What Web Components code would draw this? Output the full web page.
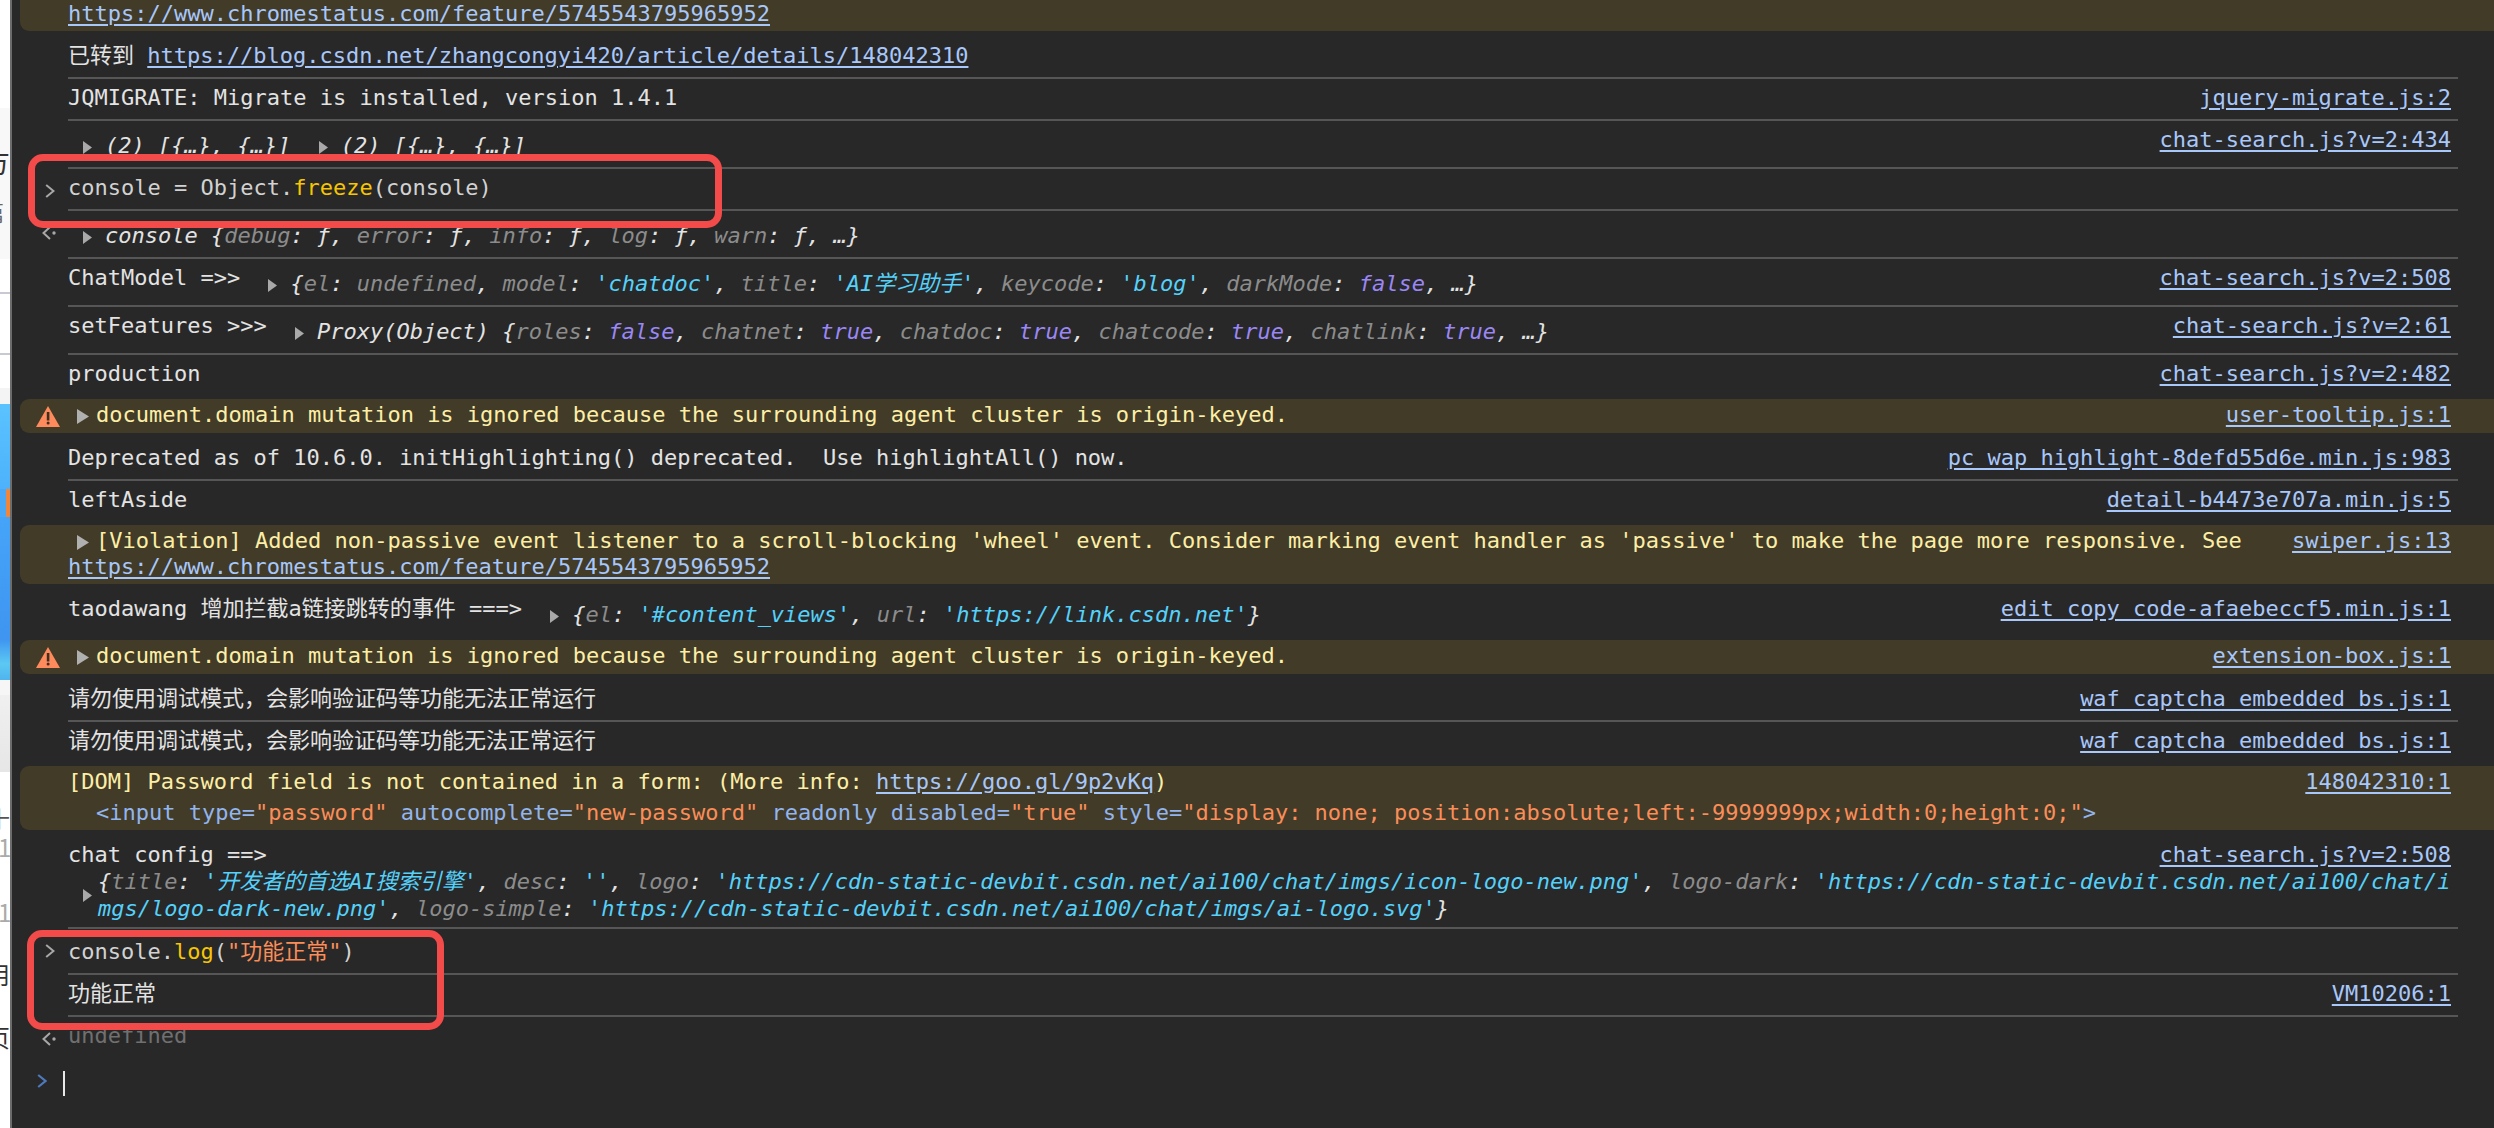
<!DOCTYPE html>
<html lang="zh">
<head>
<meta charset="utf-8">
<title>Console</title>
<style>
html,body{margin:0;padding:0;height:1128px;overflow:hidden;background:#282828}
</style>
</head>
<body>
<template id="tpl-app">
<style>
:host{display:flex;position:relative;height:1128px;overflow:hidden;background:#282828;
 font:22px/26px "DejaVu Sans Mono","Noto Sans CJK SC",monospace;color:#e3e3e3}
.panel{flex:1;min-width:0;border-left:2px solid #6c6c6c;padding-left:8px;overflow:hidden}
.list{margin-top:-28px}
</style>
<slot name="peek"></slot>
<div class="panel"><div class="list"><slot></slot></div></div>
<slot name="notes"></slot>
</template>

<template id="tpl-peek">
<style>
:host{display:flex;flex-direction:column;flex:none;width:10px;height:1128px;overflow:hidden;background:#fff;color:#333;
 font:28px/34px "Noto Sans CJK SC","Noto Sans",sans-serif}
</style>
<slot></slot>
</template>

<template id="tpl-seg">
<style>
:host{display:block;flex:none;overflow:hidden;white-space:nowrap;height:var(--h,10px);background:var(--bg,transparent);
 border-bottom:var(--bb,none);box-sizing:border-box}
.in{display:block;margin-left:var(--ml,-18px);padding-top:var(--pt,0);color:var(--c,#333);font-size:var(--fs,28px)}
</style>
<span class="in"><slot></slot></span>
</template>

<template id="tpl-row">
<style>
:host{display:flex;white-space:pre-wrap}
:host([warn]){background:#413b28;border-radius:9px 0 0 9px;color:#fdeea6;--pt:3px;--pb:5px}
.g{flex:none;width:48px}
.g svg{display:block}
.b{flex:1;min-width:0;display:grid;grid-template-columns:minmax(0,1fr) auto;column-gap:14px;
 padding:var(--pt,6px) 7px var(--pb,8px) 0;margin-right:36px}
:host([line]) .b{border-bottom:2px solid #565656}
.m{min-width:0}
.s{color:#a8c7fa;text-decoration:underline;text-underline-offset:3px;white-space:nowrap}
.u{grid-column:1 / -1}
</style>
<div class="g"></div>
<div class="b">
 <div class="m"><slot></slot></div>
 <div class="s"></div>
 <div class="u"><slot name="below"></slot></div>
</div>
</template>

<template id="tpl-obj">
<style>
:host{display:inline-block;vertical-align:top;margin-top:6px;font-style:italic;color:#e3e3e3;white-space:pre-wrap}
svg{display:inline-block;width:9px;height:13px;margin:0 13px 0 15px;vertical-align:-1px}
:host([wide]){display:flex;align-items:center;margin-top:0;line-height:27px;word-break:break-all}
:host([wide]) svg{flex:none;margin:0 6px 0 15px}
.t{min-width:0}
</style>
<svg viewBox="0 0 9 13"><path d="M0 0L9 6.500L0 13Z" fill="#a9a9a9"/></svg><span class="t"><slot></slot></span>
</template>

<template id="tpl-arrow">
<style>
:host{display:inline-block;width:28px}
svg{display:inline-block;width:12px;height:15px;margin-left:9px;vertical-align:-2px}
</style>
<svg viewBox="0 0 12 15"><path d="M0 0L12 7.500L0 15Z" fill="#b0b0b0"/></svg>
</template>

<template id="tpl-tok">
<style>
:host{display:inline}
:host([k=key]){color:#8c8c8c}
:host([k=str]){color:#55d1fa}
:host([k=bool]){color:#9a87f5}
:host([k=fn]){color:#f7c600}
:host([k=lit]){color:#fb8d58}
:host([k=tag]){color:#93b5ee}
:host([k=in]){color:#d2d2d2}
:host([k=dim]){color:#707070}
:host([k=link]){color:#a8c7fa;text-decoration:underline;text-underline-offset:3px}
</style>
<slot></slot>
</template>

<template id="tpl-caret">
<style>
:host{display:block;width:2px;height:25px;margin:0 0 0 -5px;background:#e8e8e8}
</style>
</template>

<template id="tpl-note">
<style>
:host{display:block;position:absolute;box-sizing:border-box;border:7px solid #f34a4a;border-radius:15px;pointer-events:none}
</style>
</template>

<template id="tpl-dom">
<style>
:host{display:block;margin:5px 0 0 28px}
</style>
<slot></slot>
</template>

<dt-console>
<dt-peek slot="peek">
 <dt-seg style="--h:108px"></dt-seg>
 <dt-seg style="--h:151px;--bg:#f8f8f8;--pt:36px">方<br><span style="font-size:22px;color:#666;line-height:66px">篇</span></dt-seg>
 <dt-seg style="--h:35px;--bb:2px solid #c9c9d4"></dt-seg>
 <dt-seg style="--h:61px;--bb:2px solid #c9c9d4"></dt-seg>
 <dt-seg style="--h:33px"></dt-seg>
 <dt-seg style="--h:16px;--bg:#f4f4f4"></dt-seg>
 <dt-seg style="--h:85px;--bg:linear-gradient(180deg,#5ac3ff,#4db2fb)"></dt-seg>
 <dt-seg style="--h:28px;--bg:linear-gradient(90deg,#4aa8f8 0,#4aa8f8 60%,#f0863c 60%,#f0863c 100%)"></dt-seg>
 <dt-seg style="--h:163px;--bg:linear-gradient(180deg,#45a4f8,#3f95f0 75%,#5cc8f2 90%,#4fb4ee)"></dt-seg>
 <dt-seg style="--h:15px;--bg:#f6f6f6"></dt-seg>
 <dt-seg style="--h:77px;--bg:linear-gradient(180deg,#f0f0f0,#e6e6e6)"></dt-seg>
 <dt-seg style="--h:28px"></dt-seg>
 <dt-seg style="--h:30px;--pt:0;--fs:22px;--ml:-12px;--c:#555">十</dt-seg>
 <dt-seg style="--h:36px;--fs:24px;--ml:-2px;--c:#aaa">1(</dt-seg>
 <dt-seg style="--h:29px"></dt-seg>
 <dt-seg style="--h:36px;--fs:24px;--ml:-2px;--c:#aaa">1(</dt-seg>
 <dt-seg style="--h:26px"></dt-seg>
 <dt-seg style="--h:36px;--fs:24px;--ml:-14px">用</dt-seg>
 <dt-seg style="--h:27px"></dt-seg>
 <dt-seg style="--h:40px;--fs:24px;--ml:-14px">页</dt-seg>
</dt-peek>

<dt-row warn src="swiper.js:13" style="--pb:4px"><dt-arrow></dt-arrow>[Violation] Added non-passive event listener to a scroll-blocking 'wheel' event. Consider marking event handler as 'passive' to make the page more responsive. See <dt-t k="link">https://www.chromestatus.com/feature/5745543795965952</dt-t></dt-row>
<dt-row line style="--pt:12px">已转到 <dt-t k="link">https://blog.csdn.net/zhangcongyi420/article/details/148042310</dt-t></dt-row>
<dt-row line src="jquery-migrate.js:2">JQMIGRATE: Migrate is installed, version 1.4.1</dt-row>
<dt-row line src="chat-search.js?v=2:434"><dt-obj>(2) [{…}, {…}]</dt-obj> <dt-obj>(2) [{…}, {…}]</dt-obj></dt-row>
<dt-row line icon="in"><dt-t k="in">console = Object.</dt-t><dt-t k="fn">freeze</dt-t><dt-t k="in">(console)</dt-t></dt-row>
<dt-row line icon="out"><dt-obj>console {<dt-t k="key">debug</dt-t>: ƒ, <dt-t k="key">error</dt-t>: ƒ, <dt-t k="key">info</dt-t>: ƒ, <dt-t k="key">log</dt-t>: ƒ, <dt-t k="key">warn</dt-t>: ƒ, …}</dt-obj></dt-row>
<dt-row line src="chat-search.js?v=2:508">ChatModel =&gt;&gt; <dt-obj>{<dt-t k="key">el</dt-t>: <dt-t k="key">undefined</dt-t>, <dt-t k="key">model</dt-t>: <dt-t k="str">'chatdoc'</dt-t>, <dt-t k="key">title</dt-t>: <dt-t k="str">'AI学习助手'</dt-t>, <dt-t k="key">keycode</dt-t>: <dt-t k="str">'blog'</dt-t>, <dt-t k="key">darkMode</dt-t>: <dt-t k="bool">false</dt-t>, …}</dt-obj></dt-row>
<dt-row line src="chat-search.js?v=2:61">setFeatures &gt;&gt;&gt; <dt-obj>Proxy(Object) {<dt-t k="key">roles</dt-t>: <dt-t k="bool">false</dt-t>, <dt-t k="key">chatnet</dt-t>: <dt-t k="bool">true</dt-t>, <dt-t k="key">chatdoc</dt-t>: <dt-t k="bool">true</dt-t>, <dt-t k="key">chatcode</dt-t>: <dt-t k="bool">true</dt-t>, <dt-t k="key">chatlink</dt-t>: <dt-t k="bool">true</dt-t>, …}</dt-obj></dt-row>
<dt-row src="chat-search.js?v=2:482" style="--pb:12px">production</dt-row>
<dt-row warn icon="warn" src="user-tooltip.js:1"><dt-arrow></dt-arrow>document.domain mutation is ignored because the surrounding agent cluster is origin-keyed.</dt-row>
<dt-row line src="pc_wap_highlight-8defd55d6e.min.js:983" style="--pt:12px">Deprecated as of 10.6.0. initHighlighting() deprecated.  Use highlightAll() now.</dt-row>
<dt-row src="detail-b4473e707a.min.js:5" style="--pb:12px">leftAside</dt-row>
<dt-row warn src="swiper.js:13" style="--pb:4px"><dt-arrow></dt-arrow>[Violation] Added non-passive event listener to a scroll-blocking 'wheel' event. Consider marking event handler as 'passive' to make the page more responsive. See <dt-t k="link">https://www.chromestatus.com/feature/5745543795965952</dt-t></dt-row>
<dt-row src="edit_copy_code-afaebeccf5.min.js:1" style="--pt:12px;--pb:12px">taodawang 增加拦截a链接跳转的事件 ===&gt; <dt-obj>{<dt-t k="key">el</dt-t>: <dt-t k="str">'#content_views'</dt-t>, <dt-t k="key">url</dt-t>: <dt-t k="str">'https://link.csdn.net'</dt-t>}</dt-obj></dt-row>
<dt-row warn icon="warn" src="extension-box.js:1"><dt-arrow></dt-arrow>document.domain mutation is ignored because the surrounding agent cluster is origin-keyed.</dt-row>
<dt-row line src="waf_captcha_embedded_bs.js:1" style="--pt:12px">请勿使用调试模式，会影响验证码等功能无法正常运行</dt-row>
<dt-row src="waf_captcha_embedded_bs.js:1" style="--pb:12px">请勿使用调试模式，会影响验证码等功能无法正常运行</dt-row>
<dt-row warn src="148042310:1" style="--pb:4px">[DOM] Password field is not contained in a form: (More info: <dt-t k="link">https://goo.gl/9p2vKq</dt-t>)<dt-dom slot="below"><dt-t k="tag">&lt;input type=</dt-t><dt-t k="lit">"password"</dt-t> <dt-t k="tag">autocomplete=</dt-t><dt-t k="lit">"new-password"</dt-t> <dt-t k="tag">readonly disabled=</dt-t><dt-t k="lit">"true"</dt-t> <dt-t k="tag">style=</dt-t><dt-t k="lit">"display: none; position:absolute;left:-9999999px;width:0;height:0;"</dt-t><dt-t k="tag">&gt;</dt-t></dt-dom></dt-row>
<dt-row line src="chat-search.js?v=2:508" style="--pt:12px;--pb:5px">chat config ==&gt;<dt-obj slot="below" wide>{<dt-t k="key">title</dt-t>: <dt-t k="str">'开发者的首选AI搜索引擎'</dt-t>, <dt-t k="key">desc</dt-t>: <dt-t k="str">''</dt-t>, <dt-t k="key">logo</dt-t>: <dt-t k="str">'https://cdn-static-devbit.csdn.net/ai100/chat/imgs/icon-logo-new.png'</dt-t>, <dt-t k="key">logo-dark</dt-t>: <dt-t k="str">'https://cdn-static-devbit.csdn.net/ai100/chat/imgs/logo-dark-new.png'</dt-t>, <dt-t k="key">logo-simple</dt-t>: <dt-t k="str">'https://cdn-static-devbit.csdn.net/ai100/chat/imgs/ai-logo.svg'</dt-t>}</dt-obj></dt-row>
<dt-row line icon="in" style="--pt:10px"><dt-t k="in">console.</dt-t><dt-t k="fn">log</dt-t><dt-t k="in">(</dt-t><dt-t k="lit">"功能正常"</dt-t><dt-t k="in">)</dt-t></dt-row>
<dt-row line src="VM10206:1">功能正常</dt-row>
<dt-row icon="out" style="--pb:13px"><dt-t k="dim">undefined</dt-t></dt-row>
<dt-row icon="prompt" style="--pt:9px;--pb:10px"><dt-caret></dt-caret></dt-row>

<dt-note slot="notes" style="left:28px;top:154px;width:694px;height:74px"></dt-note>
<dt-note slot="notes" style="left:27px;top:930px;width:417px;height:100px"></dt-note>
</dt-console>

<script>
const ICONS = {
  warn: '<svg width="24" height="21" viewBox="0 0 24 21" style="margin:7px 0 0 16px"><path d="M12 0L24 21H0Z" fill="#ff8a5c"/><rect x="10.800" y="6" width="2.600" height="8.500" fill="#3a2f22"/><circle cx="12.100" cy="17" r="1.500" fill="#3a2f22"/></svg>',
  in: '<svg width="10" height="14" viewBox="0 0 10 14" style="margin:15px 0 0 25px"><path d="M1.200 1L8.500 7L1.200 13" fill="none" stroke="#a8a8a8" stroke-width="2"/></svg>',
  out: '<svg width="14" height="14" viewBox="0 0 14 14" style="margin:15px 0 0 22px"><path d="M8 1L1.500 7L8 13" fill="none" stroke="#a8a8a8" stroke-width="2"/><circle cx="12" cy="7" r="1.700" fill="#a8a8a8"/></svg>',
  prompt: '<svg width="10" height="14" viewBox="0 0 10 14" style="margin:12px 0 0 17px"><path d="M1.200 1L8.500 7L1.200 13" fill="none" stroke="#4f79bd" stroke-width="2.200"/></svg>'
};
function strip(node) {
  for (const c of [...node.childNodes]) {
    if (c.nodeType === 3 && !c.textContent.trim()) c.remove();
    else if (c.nodeType === 1 && c.localName !== 'style') strip(c);
  }
}
function def(name, tpl, extra) {
  customElements.define(name, class extends HTMLElement {
    constructor() {
      super();
      const f = document.getElementById(tpl).content.cloneNode(true);
      strip(f);
      this.attachShadow({mode: 'open'}).appendChild(f);
    }
    connectedCallback() { if (extra) extra.call(this); }
  });
}
def('dt-console', 'tpl-app');
def('dt-peek', 'tpl-peek');
def('dt-seg', 'tpl-seg');
def('dt-row', 'tpl-row', function () {
  const s = this.shadowRoot;
  const ic = this.getAttribute('icon');
  if (ic) s.querySelector('.g').innerHTML = ICONS[ic];
  s.querySelector('.s').textContent = this.getAttribute('src') || '';
});
def('dt-obj', 'tpl-obj');
def('dt-arrow', 'tpl-arrow');
def('dt-t', 'tpl-tok');
def('dt-caret', 'tpl-caret');
def('dt-note', 'tpl-note');
def('dt-dom', 'tpl-dom');
</script>
</body>
</html>
